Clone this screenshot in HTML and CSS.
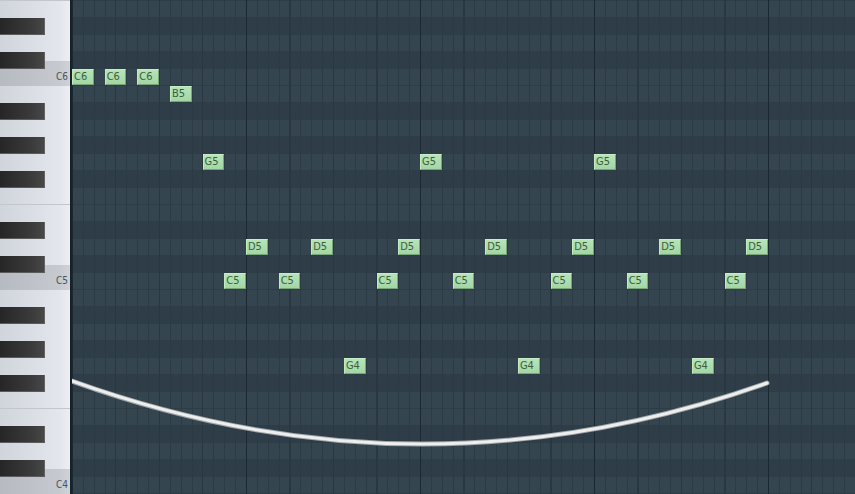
FILE: index.html
```html
<!DOCTYPE html>
<html lang="en">
<head>
    <meta charset="UTF-8">
    <meta name="viewport" content="width=device-width, initial-scale=1.0">
    <title>Piano roll</title>
    <link rel="stylesheet" href="styles.css">
</head>
<body>
    <div class="roll">
        <div class="keys">
            <div class="keys-inner" id="keys"></div>
        </div>
        <div class="grid">
            <div class="notes" id="notes"></div>
            <svg class="curve" width="783" height="494" viewBox="0 0 783 494">
                <path d="M0 381 Q348 506 695 383" fill="none" stroke="#9ea4a8" stroke-width="5" stroke-linecap="round"/>
                <path d="M0 381 Q348 506 695 383" fill="none" stroke="#eeeeee" stroke-width="3" stroke-linecap="round"/>
            </svg>
        </div>
    </div>

    <script>
        // Строки сетки: от F6 (midi 89) вниз до C4 (midi 60)
        const TOP_MIDI = 89;
        const ROWS = 30;
        const NAMES = ['C', 'C#', 'D', 'D#', 'E', 'F', 'F#', 'G', 'G#', 'A', 'A#', 'B'];

        const isBlack = midi => [1, 3, 6, 8, 10].includes(midi % 12);
        const noteName = midi => NAMES[midi % 12] + (Math.floor(midi / 12) - 1);
        const rowOf = name => {
            for (let r = 0; r < ROWS; r++) {
                if (noteName(TOP_MIDI - r) === name) return r;
            }
            return 0;
        };

        // Клавиатура
        const keys = document.getElementById('keys');
        const blacks = [];
        for (let r = 0; r < ROWS; r++) {
            const midi = TOP_MIDI - r;
            if (isBlack(midi)) {
                blacks.push(r);
                continue;
            }
            let start = isBlack(midi + 1) ? 2 * r - 1 : 2 * r;
            let end = isBlack(midi - 1) ? 2 * r + 3 : 2 * r + 2;
            if (start < 0) start = 0;

            const key = document.createElement('div');
            key.className = 'white';
            key.style.gridRow = `${start + 1} / ${end + 1}`;
            if (midi % 12 === 5) key.classList.add('f');
            if (midi % 12 === 0) {
                key.classList.add('c');
                key.innerHTML = `<span class="label">${noteName(midi)}</span>`;
            }
            keys.appendChild(key);
        }
        blacks.forEach(r => {
            const key = document.createElement('div');
            key.className = 'black';
            key.style.gridRow = `${2 * r + 1} / span 2`;
            keys.appendChild(key);
        });

        // Ноты: [имя, шаг]
        const melody = [
            ['C6', 0], ['C6', 3], ['C6', 6], ['B5', 9], ['G5', 12],
            ['C5', 14], ['D5', 16], ['C5', 19], ['D5', 22], ['G4', 25],
            ['C5', 28], ['D5', 30], ['G5', 32], ['C5', 35], ['D5', 38],
            ['G4', 41], ['C5', 44], ['D5', 46], ['G5', 48], ['C5', 51],
            ['D5', 54], ['G4', 57], ['C5', 60], ['D5', 62]
        ];

        const notes = document.getElementById('notes');
        melody.forEach(([name, step]) => {
            const note = document.createElement('div');
            note.className = 'note';
            note.textContent = name;
            note.style.gridRow = rowOf(name) + 1;
            note.style.gridColumn = `${step + 1} / span 2`;
            notes.appendChild(note);
        });
    </script>
</body>
</html>
```

FILE: styles.css
```css
html, body {
    margin: 0;
    padding: 0;
    height: 100%;
    overflow: hidden;
}
body {
    font-family: 'Liberation Sans Narrow', 'DejaVu Sans Condensed', 'Liberation Sans', sans-serif;
    background: #33444f;
}
.roll {
    display: flex;
    height: 494px;
}
.keys {
    flex: none;
    width: 70px;
    height: 494px;
    overflow: hidden;
    border-right: 2px solid #17232b;
}
.keys-inner {
    display: grid;
    grid-template-columns: 45px 25px;
    grid-template-rows: repeat(60, 8.5px);
    margin-top: -16px;
}
.white {
    grid-column: 1 / 3;
    background: linear-gradient(to right, #d0d4db, #e3e6ed 85%, #eceef3);
    box-sizing: border-box;
    display: flex;
    align-items: flex-end;
    justify-content: flex-end;
}
.white.f {
    border-bottom: 1px solid #c2c6cd;
}
.white.c {
    background: linear-gradient(to right, #b6bac1, #c6c9cf 85%, #cfd2d7);
}
.label {
    font-size: 10px;
    color: #4e5257;
    padding: 0 2px 4px 0;
    line-height: 10px;
}
.black {
    grid-column: 1;
    background: linear-gradient(to right, #262626, #3a3a3a 70%, #474747);
    border-right: 1px solid #626262;
    border-bottom: 1px solid #5a5a5a;
    box-sizing: border-box;
}
.grid {
    flex: 1;
    position: relative;
    height: 494px;
    overflow: hidden;
}
.notes {
    display: grid;
    grid-template-columns: repeat(72, 10.875px);
    grid-template-rows: repeat(30, 17px);
    height: 510px;
    margin-top: -16px;
    background:
        repeating-linear-gradient(to right, #1c2830 0 1.5px, transparent 1.5px 174px),
        repeating-linear-gradient(to right, #2a3740 0 1px, transparent 1px 43.5px),
        repeating-linear-gradient(to right, #2c3a44 0 1px, transparent 1px 10.875px),
        repeating-linear-gradient(to bottom, transparent 0 16px, #2e3c46 16px 17px),
        repeating-linear-gradient(to bottom,
            #34454f 0 34px, #2e3d47 34px 51px,
            #34454f 51px 68px, #2e3d47 68px 85px,
            #34454f 85px 119px, #2e3d47 119px 136px,
            #34454f 136px 153px, #2e3d47 153px 170px,
            #34454f 170px 187px, #2e3d47 187px 204px);
}
.note {
    margin: 0 0 1px 0;
    padding-left: 1px;
    background: linear-gradient(#b6e4b7, #a3d6a5);
    border: 1px solid #78a67a;
    border-top-color: #c8eec9;
    border-left-color: #c0eac1;
    box-sizing: border-box;
    font-size: 11px;
    line-height: 14px;
    color: #3c5e3e;
    overflow: hidden;
    white-space: nowrap;
}
.curve {
    position: absolute;
    top: 0;
    left: 0;
    pointer-events: none;
}
```
